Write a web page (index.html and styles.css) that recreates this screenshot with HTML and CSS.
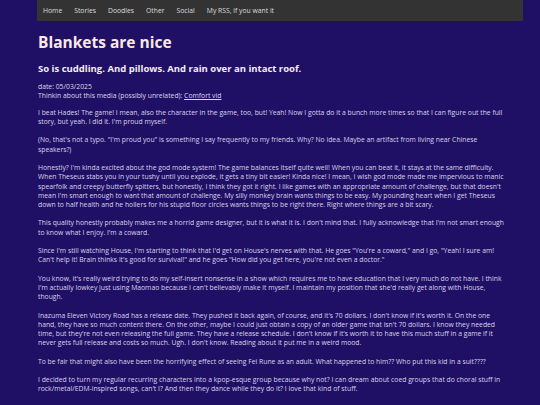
FILE: index.html
```html
<!DOCTYPE html>
<html>
<head>
<meta charset="utf-8">
<link rel="stylesheet" href="styles.css">
</head>
<body>
<nav class="nav">
  <a href="#">Home</a>
  <a href="#">Stories</a>
  <a href="#">Doodles</a>
  <a href="#">Other</a>
  <a href="#">Social</a>
  <a href="#">My RSS, if you want it</a>
</nav>
<main class="post">
  <h1 class="title">Blankets are nice</h1>
  <h2 class="subtitle">So is cuddling. And pillows. And rain over an intact roof.</h2>
  <div class="meta">
    <div>date: 05/03/2025</div>
    <div>Thinkin about this media (possibly unrelated): <a href="#" class="link">Comfort vid</a></div>
  </div>
  <p>I beat Hades! The game! I mean, also the character in the game, too, but! Yeah! Now I gotta do it a bunch more times so that I can figure out the full story, but yeah. I did it. I'm proud myself.</p>
  <p>(No, that's not a typo. "I'm proud you" is something I say frequently to my friends. Why? No idea. Maybe an artifact from living near Chinese speakers?)</p>
  <p>Honestly? I'm kinda excited about the god mode system! The game balances itself quite well! When you can beat it, it stays at the same difficulty. When Theseus stabs you in your tushy until you explode, it gets a tiny bit easier! Kinda nice! I mean, I wish god mode made me impervious to manic spearfolk and creepy butterfly spitters, but honestly, I think they got it right. I like games with an appropriate amount of challenge, but that doesn't mean I'm smart enough to want that amount of challenge. My silly monkey brain wants things to be easy. My pounding heart when I get Theseus down to half health and he hollers for his stupid floor circles wants things to be right there. Right where things are a bit scary.</p>
  <p>This quality honestly probably makes me a horrid game designer, but it is what it is. I don't mind that. I fully acknowledge that I'm not smart enough to know what I enjoy. I'm a coward.</p>
  <p>Since I'm still watching House, I'm starting to think that I'd get on House's nerves with that. He goes "You're a coward," and I go, "Yeah! I sure am! Can't help it! Brain thinks it's good for survival!" and he goes "How did you get here, you're not even a doctor."</p>
  <p>You know, it's really weird trying to do my self-insert nonsense in a show which requires me to have education that I very much do not have. I think I'm actually lowkey just using Maomao because I can't believably make it myself. I maintain my position that she'd really get along with House, though.</p>
  <p>Inazuma Eleven Victory Road has a release date. They pushed it back again, of course, and it's 70 dollars. I don't know if it's worth it. On the one hand, they have so much content there. On the other, maybe I could just obtain a copy of an older game that isn't 70 dollars. I know they needed time, but they're not even releasing the full game. They have a release schedule. I don't know if it's worth it to have this much stuff in a game if it never gets full release and costs so much. Ugh. I don't know. Reading about it put me in a weird mood.</p>
  <p>To be fair that might also have been the horrifying effect of seeing Fei Rune as an adult. What happened to him?? Who put this kid in a suit????</p>
  <p>I decided to turn my regular recurring characters into a kpop-esque group because why not? I can dream about coed groups that do choral stuff in rock/metal/EDM-inspired songs, can't I? And then they dance while they do it? I love that kind of stuff.</p>
</main>
</body>
</html>
```
FILE: styles.css
```css
html, body {
  margin: 0;
  padding: 0;
}
body {
  background: #1f1066;
  font-family: "Open Sans", "DejaVu Sans", sans-serif;
  color: #d9d2e6;
  font-size: 6.8px;
  line-height: 9.3px;
}
.nav {
  margin-left: 37px;
  width: 486px;
  height: 21px;
  background: #333333;
  display: flex;
  align-items: center;
  padding-left: 6px;
  box-sizing: border-box;
  gap: 12px;
}
.nav a {
  color: #dcdcdc;
  text-decoration: none;
  font-size: 6.8px;
}
.post {
  margin-left: 38px;
  width: 466px;
}
.title {
  margin: 10.7px 0 0;
  font-size: 15.5px;
  line-height: 20px;
  font-weight: 700;
  color: #fbe8e6;
}
.subtitle {
  margin: 10px 0 0;
  font-size: 9.5px;
  line-height: 13px;
  font-weight: 700;
  color: #f6ecef;
}
.meta {
  margin-top: 7.2px;
  color: #ddd5e6;
}
.link {
  color: #ddd5e6;
  text-decoration: underline;
}
p {
  margin: 7.3px 0 0;
}
p + p {
  margin-top: 9px;
}
```
